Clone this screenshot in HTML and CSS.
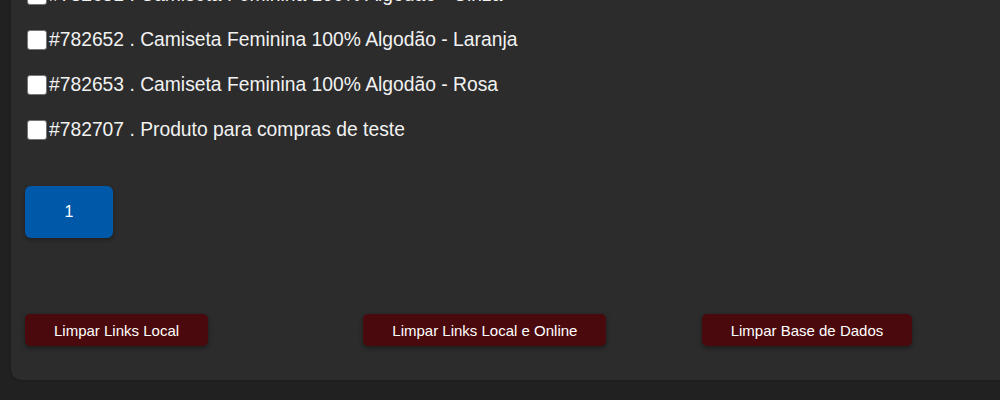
FILE: index.html
```html
<!DOCTYPE html>
<html lang="pt">
<head>
<meta charset="utf-8">
<title>Produtos</title>
<link rel="stylesheet" href="styles.css">
</head>
<body>
<div class="card">
  <ul class="list">
    <li class="item"><input type="checkbox" class="check"><span>#782651 . Camiseta Feminina 100% Algodão - Cinza</span></li>
    <li class="item"><input type="checkbox" class="check"><span>#782652 . Camiseta Feminina 100% Algodão - Laranja</span></li>
    <li class="item"><input type="checkbox" class="check"><span>#782653 . Camiseta Feminina 100% Algodão - Rosa</span></li>
    <li class="item"><input type="checkbox" class="check"><span>#782707 . Produto para compras de teste</span></li>
  </ul>
  <div class="pagination">
    <button class="page active">1</button>
  </div>
  <div class="actions">
    <div class="action-cell"><button class="danger">Limpar Links Local</button></div>
    <div class="action-cell"><button class="danger">Limpar Links Local e Online</button></div>
    <div class="action-cell"><button class="danger">Limpar Base de Dados</button></div>
  </div>
</div>
</body>
</html>
```

FILE: styles.css
```css
html, body {
  margin: 0;
  padding: 0;
  overflow: hidden;
}
body {
  background: #212121;
  font-family: "Liberation Sans", Arial, sans-serif;
  color: #f2f2f2;
  width: 1000px;
  height: 400px;
}
.card {
  margin-left: 11px;
  margin-top: -28px;
  width: 1015px;
  background: #2c2c2c;
  border-radius: 10px;
  padding: 0 14px 34px;
  box-shadow: 0 0 3px rgba(0,0,0,0.35);
}
.list {
  list-style: none;
  margin: 0;
  padding: 0;
}
.item {
  height: 45px;
  display: flex;
  align-items: center;
  font-size: 19.3px;
}
.list .item:first-child {
  margin-top: -6px;
}
.check {
  appearance: none;
  -webkit-appearance: none;
  width: 20px;
  height: 20px;
  margin: 0 2px 0 2px;
  background: #ffffff;
  border: 1px solid #767676;
  border-radius: 3px;
  box-sizing: border-box;
}
.pagination {
  margin-top: 34px;
  display: flex;
}
.page {
  width: 88px;
  height: 52px;
  border: none;
  border-radius: 6px;
  background: #0058a9;
  color: #ffffff;
  font-family: "Liberation Sans", Arial, sans-serif;
  font-size: 16px;
  box-shadow: 0 2px 4px rgba(0,0,0,0.3);
}
.actions {
  margin-top: 76px;
  display: grid;
  grid-template-columns: 1fr 1fr 1fr;
}
.action-cell {
  display: flex;
}
.danger {
  height: 32px;
  padding: 0 29px;
  border: none;
  border-radius: 5px;
  background: #4a090c;
  color: #ffffff;
  font-family: "Liberation Sans", Arial, sans-serif;
  font-size: 15px;
  box-shadow: 0 2px 5px rgba(0,0,0,0.4);
}
```
